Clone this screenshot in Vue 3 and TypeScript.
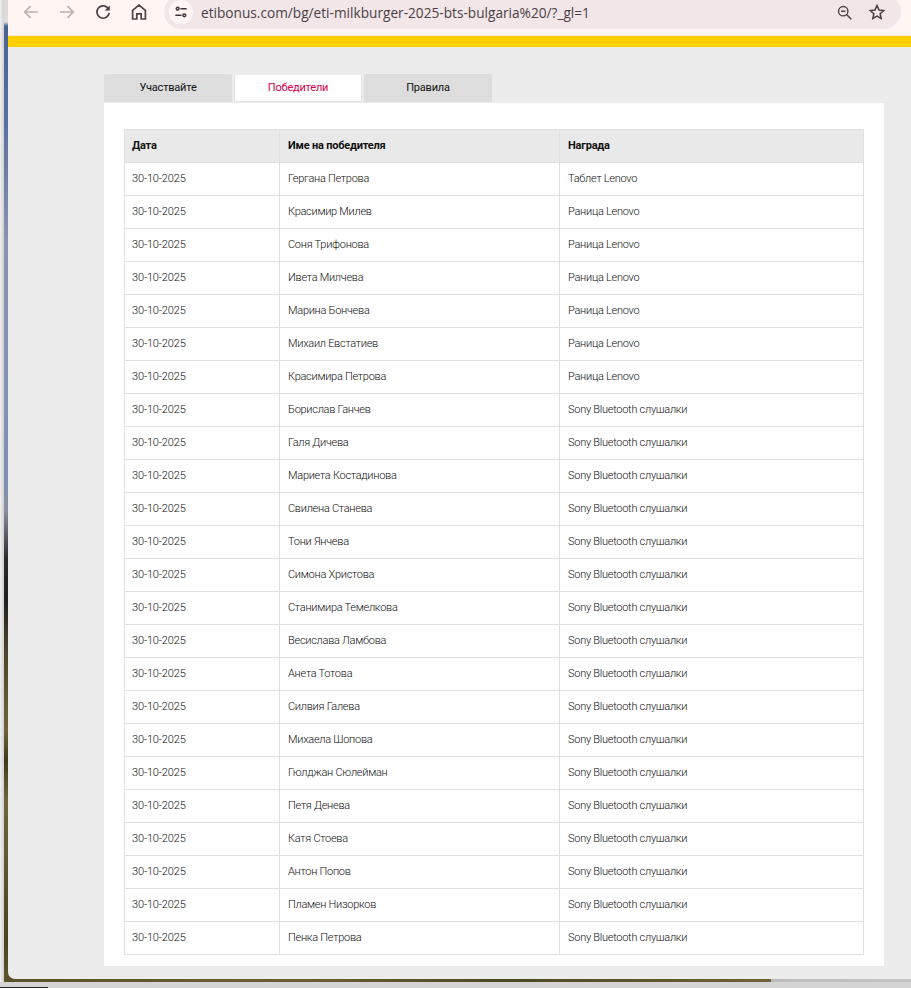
<script setup lang="ts">
const tabs = [
  { label: 'Участвайте', active: false },
  { label: 'Победители', active: true },
  { label: 'Правила', active: false },
]
const tablet = 'Таблет Lenovo'
const bag = 'Раница Lenovo'
const sony = 'Sony Bluetooth слушалки'
const rows: { name: string; prize: string }[] = [
  { name: 'Гергана Петрова', prize: tablet },
  ...['Красимир Милев', 'Соня Трифонова', 'Ивета Милчева', 'Марина Бончева', 'Михаил Евстатиев', 'Красимира Петрова'].map((name) => ({ name, prize: bag })),
  ...['Борислав Ганчев', 'Галя Дичева', 'Мариета Костадинова', 'Свилена Станева', 'Тони Янчева', 'Симона Христова', 'Станимира Темелкова', 'Весислава Ламбова', 'Анета Тотова', 'Силвия Галева', 'Михаела Шопова', 'Гюлджан Сюлейман', 'Петя Денева', 'Катя Стоева', 'Антон Попов', 'Пламен Низорков', 'Пенка Петрова'].map((name) => ({ name, prize: sony })),
]
</script>

<template>
  <div class="screen">
    <div class="desk">
      <div class="window">
        <header class="toolbar">
          <div class="nav">
            <svg class="icon off" viewBox="0 0 20 20"><path d="M17 10H4M9.5 4.2 3.8 10l5.7 5.8" /></svg>
            <svg class="icon off" viewBox="0 0 20 20"><path d="M3 10h13M10.5 4.2 16.2 10l-5.7 5.8" /></svg>
            <svg class="icon" viewBox="0 0 20 20"><path d="M15.6 7.2A6.2 6.2 0 1 0 16.2 11" /><path class="fill" d="M16.8 3.4v5.2h-5.2z" /></svg>
            <svg class="icon" viewBox="0 0 20 20"><path d="M3.6 17V8.4L10 3.2l6.4 5.2V17h-4.2v-5.2H7.8V17z" /></svg>
          </div>
          <div class="omnibox">
            <span class="chip">
              <svg class="tune" viewBox="0 0 16 16"><circle cx="4.2" cy="4.2" r="1.6" /><path d="M7.4 4.2H14.5M1.5 11.8h7.1" /><circle cx="11.8" cy="11.8" r="1.6" /></svg>
            </span>
            <span class="url">etibonus.com/bg/eti-milkburger-2025-bts-bulgaria%20/?_gl=1</span>
            <svg class="icon zoom" viewBox="0 0 20 20"><circle cx="8.5" cy="8.5" r="5.5" /><path d="M12.7 12.7 18 18M6 8.5h5" /></svg>
            <svg class="icon star" viewBox="0 0 20 20"><path d="m10 2.8 2.2 4.9 5.3.6-4 3.6 1.1 5.3L10 14.5l-4.6 2.7 1.1-5.3-4-3.6 5.3-.6z" /></svg>
          </div>
        </header>
        <div class="stripe"></div>
        <main class="page">
          <div class="panel">
            <nav class="tabs">
              <a v-for="t in tabs" :key="t.label" class="tab" :class="{ active: t.active }">{{ t.label }}</a>
            </nav>
            <section class="card">
              <table class="winners">
                <colgroup>
                  <col class="c1" />
                  <col class="c2" />
                  <col class="c3" />
                </colgroup>
                <thead>
                  <tr>
                    <th>Дата</th>
                    <th>Име на победителя</th>
                    <th>Награда</th>
                  </tr>
                </thead>
                <tbody>
                  <tr v-for="r in rows" :key="r.name">
                    <td class="date">30-10-2025</td>
                    <td>{{ r.name }}</td>
                    <td>{{ r.prize }}</td>
                  </tr>
                </tbody>
              </table>
            </section>
          </div>
        </main>
      </div>
    </div>
    <div class="taskbar"><span class="task"></span></div>
  </div>
</template>

<style>
html, body { margin: 0; background: #d9d9d9; }
</style>

<style scoped>
.screen {
  width: 911px;
  height: 988px;
  overflow: hidden;
  display: flex;
  flex-direction: column;
  background: linear-gradient(90deg, #f0f0f0, #cfcfcf 4px, #d4d4d4 4px);
}
.desk {
  height: 982px;
  margin-left: 4px;
  padding: 0 0 3px 4px;
  box-sizing: border-box;
  background:
    linear-gradient(90deg, #5a5228 0, #6a5f30 300px, #4e4822 500px, #6d6234 767px, #bcbcbc 767px, #c4c4c4 100%) left bottom / 100% 3px no-repeat,
    linear-gradient(180deg, #dcdcdc 0, #dcdcdc 22px, #4a6393 26px, #566fa0 120px, #8a93b0 240px, #7e90b6 480px, #8a90a0 510px, #2a2a2c 560px, #1f1f20 600px, #453f28 640px, #5d5530 690px, #6f6434 730px, #3f3a1c 760px, #70653a 800px, #5d5430 870px, #4a4420 940px, #5e5428 982px);
}
.window {
  height: 979px;
  display: flex;
  flex-direction: column;
  background: #ececec;
  border-bottom-left-radius: 7px;
  overflow: hidden;
}
.toolbar {
  height: 35px;
  flex: none;
  border-bottom: 1px solid #f6e2e2;
  background: #fff6f4;
  display: flex;
  overflow: hidden;
}
.nav {
  width: 156px;
  flex: none;
  display: flex;
  padding-left: 13px;
  box-sizing: border-box;
  gap: 16px;
  padding-top: 2px;
  height: 20px;
}
.icon {
  width: 20px;
  height: 20px;
  flex: none;
  fill: none;
  stroke: #4e4044;
  stroke-width: 1.7;
}
.icon .fill { fill: #4e4044; stroke: none; }
.icon.off { stroke: #b9b0b1; }
.omnibox {
  width: 737px;
  height: 34px;
  margin-top: -5px;
  flex: none;
  border-radius: 17px;
  background: #f2e6e9;
  display: flex;
  align-items: center;
  padding-left: 5px;
  box-sizing: border-box;
}
.chip {
  width: 24px;
  height: 24px;
  border-radius: 50%;
  background: #fff6f4;
  flex: none;
  display: flex;
  align-items: center;
  justify-content: center;
}
.tune {
  width: 14px;
  height: 14px;
  fill: none;
  stroke: #3f3337;
  stroke-width: 1.7;
}
.url {
  margin-left: 8px;
  width: 632px;
  flex: none;
  font: 400 13.67px "Open Sans", sans-serif;
  color: #4b3f43;
  white-space: nowrap;
}
.zoom { margin-left: 3px; width: 17px; height: 17px; }
.star { margin-left: 15px; width: 18px; height: 18px; }
.stripe {
  height: 11px;
  flex: none;
  background: #ffd000;
}
.page {
  flex: 1;
  padding: 27px 0 0 96px;
}
.panel {
  width: 780px;
}
.tabs {
  display: flex;
  gap: 2px;
  height: 29px;
}
.tab {
  width: 128px;
  height: 28px;
  box-sizing: border-box;
  background: #dddddd;
  border-radius: 2px 2px 0 0;
  color: #111;
  font: 400 11px/27px Roboto, sans-serif;
  letter-spacing: -0.2px;
  text-align: center;
}
.tab.active {
  background: #fff;
  color: #d4004f;
  border: 1px solid #e4e4e4;
  border-top-color: #ececec;
  line-height: 26px;
}
.card {
  background: #fff;
  padding: 26px 20px 11px;
}
.winners {
  width: 739px;
  table-layout: fixed;
  border-collapse: collapse;
  font: 300 11px Roboto, sans-serif;
  letter-spacing: -0.27px;
  color: #111;
}
.c1 { width: 155px; }
.c2 { width: 280px; }
.c3 { width: 304px; }
th, td {
  height: 33px;
  padding: 0 8px 2px;
  box-sizing: border-box;
  border: 1px solid #e0e0e0;
  text-align: left;
  white-space: nowrap;
}
th:first-child, td:first-child { padding-left: 7px; }
td.date { letter-spacing: -0.15px; }
th {
  background: #e9e9e9;
  color: #111;
  font-weight: 700;
  letter-spacing: -0.2px;
  padding-bottom: 1px;
}
.taskbar {
  height: 6px;
  flex: none;
  background: #d4d4d4;
  position: relative;
  display: flex;
  align-items: flex-end;
}
.task {
  width: 48px;
  height: 1px;
  background: #222;
}
</style>
